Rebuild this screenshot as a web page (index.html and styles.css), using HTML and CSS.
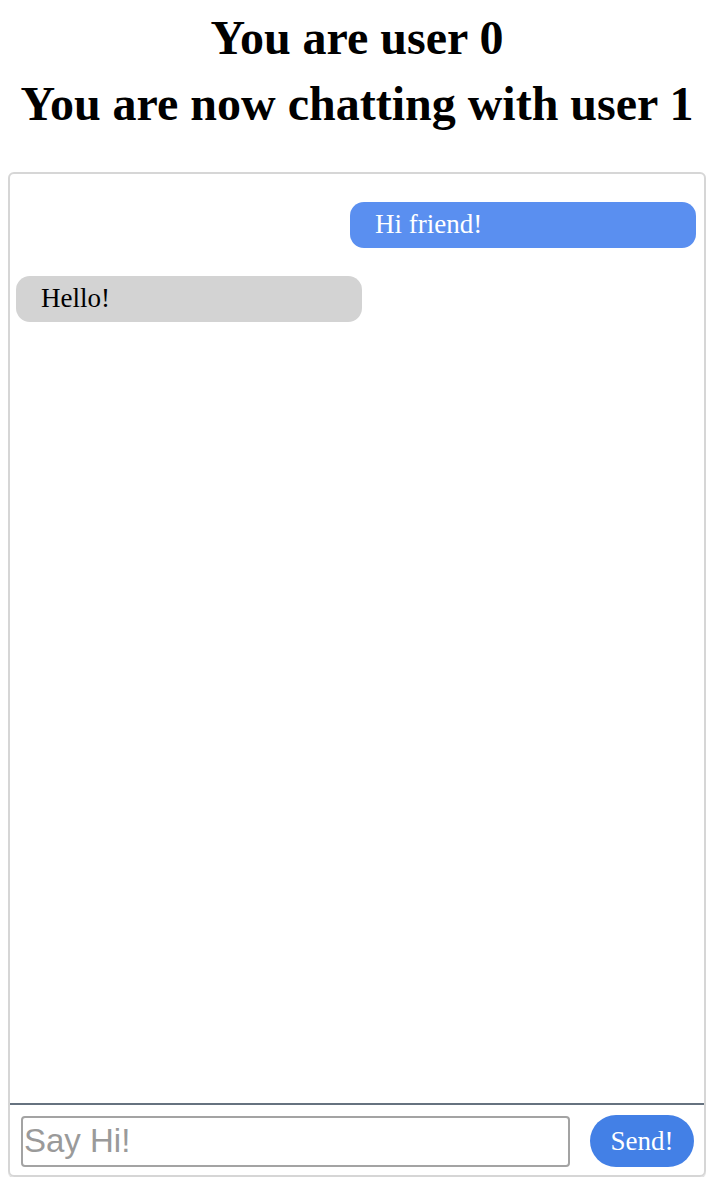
FILE: index.html
```html
<!DOCTYPE html>
<html lang="en">
<head>
<meta charset="utf-8">
<title>Chat</title>
<link rel="stylesheet" href="styles.css">
</head>
<body>
<header class="header">
  <h1 class="title title-first">You are user 0</h1>
  <h1 class="title title-second">You are now chatting with user 1</h1>
</header>
<main class="chat">
  <div class="messages">
    <div class="bubble bubble-mine">Hi friend!</div>
    <div class="bubble bubble-theirs">Hello!</div>
  </div>
  <form class="composer">
    <input class="composer-input" type="text" placeholder="Say Hi!">
    <button class="composer-send" type="button">Send!</button>
  </form>
</main>
</body>
</html>
```
FILE: styles.css
```css
html, body {
  background: #ffffff;
}
body {
  margin: 8px;
  font-family: "Liberation Serif", "Times New Roman", serif;
  color: #000;
}
.header {
  text-align: center;
}
.title {
  font-size: 48px;
  line-height: 53px;
  font-weight: bold;
  margin: 0;
}
.title-first {
  margin-top: 3px;
}
.title-second {
  margin-top: 13px;
}
.chat {
  margin-top: 42px;
  height: 1005px;
  box-sizing: border-box;
  border: 2px solid #d6d6d6;
  border-radius: 6px;
  box-shadow: 0 1px 1px rgba(0, 0, 0, 0.15);
  display: flex;
  flex-direction: column;
  overflow: hidden;
}
.messages {
  flex: 1;
  display: flex;
  flex-direction: column;
  gap: 28px;
  padding: 28px 8px 0 6px;
}
.bubble {
  width: 346px;
  box-sizing: border-box;
  padding: 7px 25px 8px;
  font-size: 27px;
  line-height: 31px;
  border-radius: 14px;
}
.bubble-mine {
  align-self: flex-end;
  background: #5a8ff0;
  color: #ffffff;
}
.bubble-theirs {
  align-self: flex-start;
  background: #d3d3d3;
  color: #000;
}
.composer {
  margin: 0;
  border-top: 2px solid #66727f;
  display: flex;
  align-items: center;
  gap: 20px;
  padding: 10px 10px 8px 11px;
}
.composer-input {
  flex: 1;
  min-width: 0;
  height: 51px;
  box-sizing: border-box;
  border: 2px solid #a3a3a3;
  border-radius: 4px;
  padding: 0 0 0 1px;
  font-family: "Liberation Sans", Arial, sans-serif;
  font-size: 33px;
  color: #000;
  outline: none;
}
.composer-input::placeholder {
  color: #9a9a9a;
}
.composer-send {
  width: 104px;
  height: 52px;
  border: none;
  border-radius: 26px;
  background: #4380e6;
  color: #ffffff;
  font-family: "Liberation Serif", "Times New Roman", serif;
  font-size: 27px;
  padding: 0;
  cursor: pointer;
}
```
